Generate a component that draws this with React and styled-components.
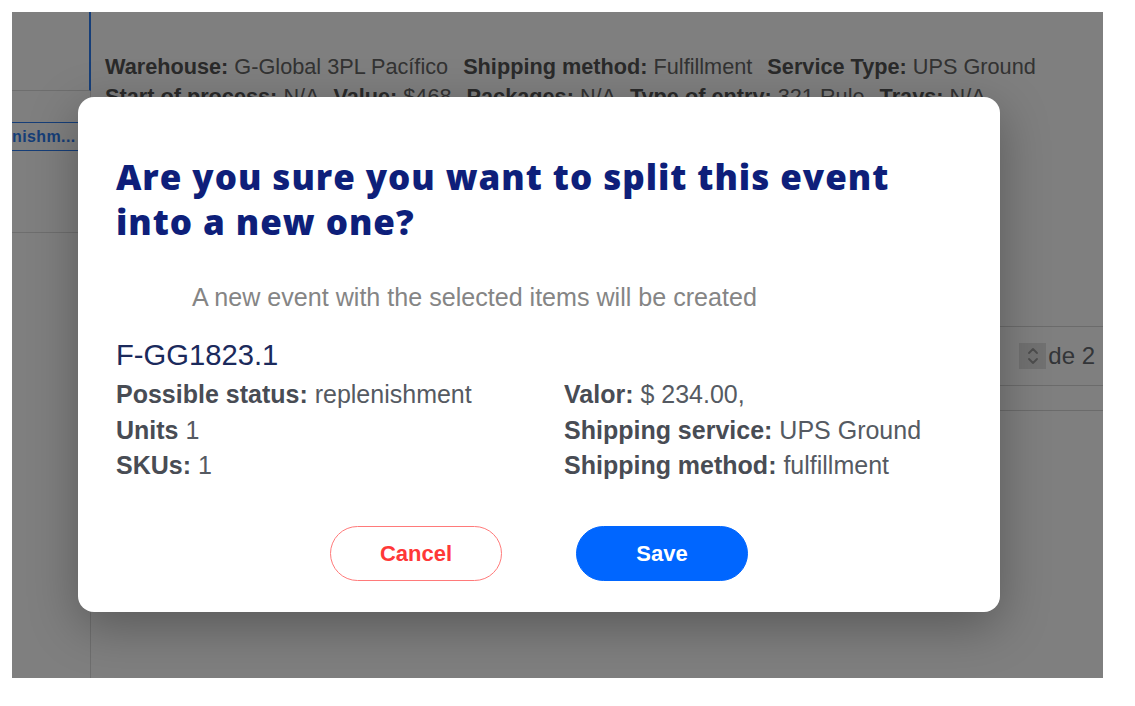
import React from "react";
import styled, { createGlobalStyle } from "styled-components";

const Global = createGlobalStyle`
  html, body { margin: 0; padding: 0; background: #ffffff; }
  body { font-family: "Liberation Sans", Arial, sans-serif; }
  * { box-sizing: border-box; }
`;

const Frame = styled.div`
  margin: 12px;
  width: 1091px;
  height: 666px;
  position: relative;
  overflow: hidden;
  background: #ffffff;
`;

const Page = styled.div`
  display: grid;
  grid-template-columns: 79px 1fr;
  height: 100%;
`;

const Sidebar = styled.aside`
  border-right: 1px solid #dcdcdc;
  display: flex;
  flex-direction: column;
`;

const SideTop = styled.div`
  height: 79px;
  border-bottom: 1px solid #dcdcdc;
  border-right: 2px solid #2d7cf0;
  margin-right: -1px;
`;

const SideTag = styled.div`
  margin-top: 31px;
  height: 29px;
  border-top: 1px solid #2d7cf0;
  border-bottom: 1px solid #2d7cf0;
  display: flex;
  align-items: center;
  font-size: 16px;
  font-weight: 700;
  color: #2d7cf0;
  letter-spacing: 0.4px;
  white-space: nowrap;
`;

const SideSection = styled.div`
  height: 82px;
  border-bottom: 1px solid #dcdcdc;
`;

const Main = styled.main`
  display: flex;
  flex-direction: column;
  padding-top: 40px;
`;

const InfoLine = styled.div`
  padding-left: 14px;
  font-size: 21.7px;
  line-height: 30px;
  color: #666666;
  white-space: nowrap;
  & b { color: #555555; }
  & span + b { margin-left: 9px; }
`;

const Toolbar = styled.div`
  margin-top: 214px;
  height: 60px;
  border-top: 1px solid #d6d6d6;
  border-bottom: 1px solid #d6d6d6;
  display: flex;
  justify-content: flex-end;
  align-items: center;
  padding-right: 8px;
  gap: 2px;
`;

const Spinner = styled.div`
  width: 27px;
  height: 26px;
  background: #e2e2e2;
  display: flex;
  align-items: center;
  justify-content: center;
`;

const PageText = styled.span`
  font-size: 24px;
  color: #666a70;
`;

const TableRow = styled.div`
  height: 25px;
  border-bottom: 1px solid #d6d6d6;
`;

const Overlay = styled.div`
  position: absolute;
  inset: 0;
  background: rgba(0, 0, 0, 0.5);
  padding: 85px 0 0 66px;
`;

const Modal = styled.div`
  width: 922px;
  height: 515px;
  background: #ffffff;
  border-radius: 16px;
  box-shadow: 0 14px 50px rgba(0, 0, 0, 0.3);
  padding: 57px 38px 31px 38px;
  display: flex;
  flex-direction: column;
`;

const Title = styled.h2`
  margin: 0;
  font-family: "Open Sans", Lato, sans-serif;
  font-weight: 800;
  font-size: 35px;
  line-height: 45px;
  color: #0e1f7a;
  letter-spacing: 0.95px;
`;

const Subtitle = styled.p`
  margin: 38px 0 0 76px;
  font-size: 25.1px;
  line-height: 30px;
  color: #858585;
`;

const EventId = styled.div`
  margin-top: 26px;
  font-size: 29.2px;
  line-height: 34px;
  color: #1b2a5c;
`;

const InfoGrid = styled.div`
  margin-top: 5px;
  display: grid;
  grid-template-columns: 448px 1fr;
  grid-auto-rows: 35.5px;
  align-items: center;
`;

const Field = styled.div`
  font-size: 25px;
  color: #555a62;
  white-space: nowrap;
  & b { color: #484c54; }
`;

const Actions = styled.div`
  margin-top: auto;
  display: flex;
  justify-content: center;
  gap: 74px;
`;

const Button = styled.button`
  width: 172px;
  height: 55px;
  border-radius: 28px;
  font-family: "Liberation Sans", Arial, sans-serif;
  font-size: 22px;
  font-weight: 700;
  cursor: pointer;
  border: 1.5px solid ${(p) => (p.$primary ? "#0066ff" : "#ff7a7a")};
  background: ${(p) => (p.$primary ? "#0066ff" : "#ffffff")};
  color: ${(p) => (p.$primary ? "#ffffff" : "#ff3838")};
`;

const ChevronSpin = () => (
  <svg width="14" height="22" viewBox="0 0 14 22" fill="none" stroke="#9a9a9a" strokeWidth="1.8" strokeLinecap="round" strokeLinejoin="round">
    <path d="M3 8 L7 4 L11 8" />
    <path d="M3 14 L7 18 L11 14" />
  </svg>
);

export default function App() {
  return (
    <>
      <Global />
      <Frame>
        <Page>
          <Sidebar>
            <SideTop />
            <SideTag>nishm...</SideTag>
            <SideSection />
          </Sidebar>
          <Main>
            <InfoLine>
              <b>Warehouse:</b> <span>G-Global 3PL Pacífico</span> <b>Shipping method:</b> <span>Fulfillment</span> <b>Service Type:</b> <span>UPS Ground</span>
            </InfoLine>
            <InfoLine>
              <b>Start of process:</b> <span>N/A</span> <b>Value:</b> <span>$468</span> <b>Packages:</b> <span>N/A</span> <b>Type of entry:</b> <span>321 Rule</span> <b>Trays:</b> <span>N/A</span>
            </InfoLine>
            <Toolbar>
              <Spinner>
                <ChevronSpin />
              </Spinner>
              <PageText>de 2</PageText>
            </Toolbar>
            <TableRow />
          </Main>
        </Page>
        <Overlay>
          <Modal>
            <Title>
              Are you sure you want to split this event
              <br />
              into a new one?
            </Title>
            <Subtitle>A new event with the selected items will be created</Subtitle>
            <EventId>F-GG1823.1</EventId>
            <InfoGrid>
              <Field>
                <b>Possible status:</b> replenishment
              </Field>
              <Field>
                <b>Valor:</b> $ 234.00,
              </Field>
              <Field>
                <b>Units</b> 1
              </Field>
              <Field>
                <b>Shipping service:</b> UPS Ground
              </Field>
              <Field>
                <b>SKUs:</b> 1
              </Field>
              <Field>
                <b>Shipping method:</b> fulfillment
              </Field>
            </InfoGrid>
            <Actions>
              <Button>Cancel</Button>
              <Button $primary>Save</Button>
            </Actions>
          </Modal>
        </Overlay>
      </Frame>
    </>
  );
}
